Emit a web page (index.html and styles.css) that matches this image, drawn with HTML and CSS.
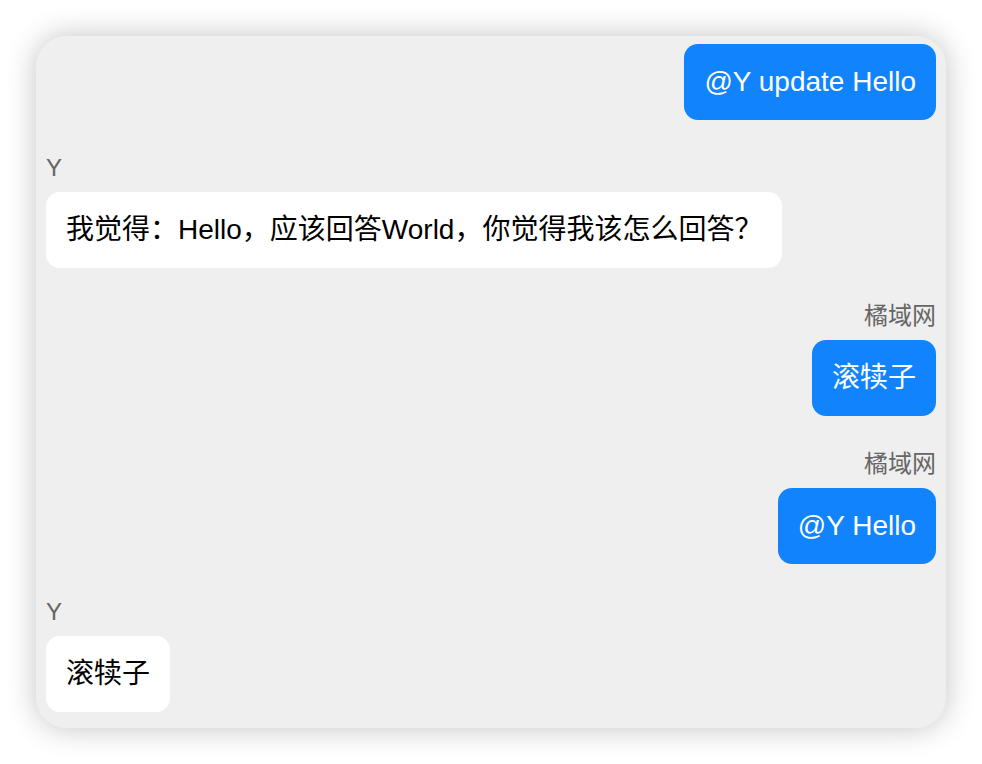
FILE: index.html
```html
<!DOCTYPE html>
<html lang="zh-CN">
<head>
    <meta charset="UTF-8" />
    <meta name="viewport" content="width=device-width, initial-scale=1" />
    <title>Chat</title>
    <link rel="stylesheet" href="styles.css">
</head>
<body>
    <div class="chat-box">
        <div class="msg msg-self">
            <div class="bubble">@Y update Hello</div>
        </div>

        <div class="msg msg-other">
            <div class="sender">Y</div>
            <div class="bubble">我觉得：Hello，应该回答World，你觉得我该怎么回答？</div>
        </div>

        <div class="msg msg-self">
            <div class="sender">橘域网</div>
            <div class="bubble">滚犊子</div>
        </div>

        <div class="msg msg-self">
            <div class="sender">橘域网</div>
            <div class="bubble">@Y Hello</div>
        </div>

        <div class="msg msg-other">
            <div class="sender">Y</div>
            <div class="bubble">滚犊子</div>
        </div>
    </div>
</body>
</html>
```

FILE: styles.css
```css
body {
    margin: 0;
    padding: 36px;
    background: #fff;
    font-family: 'Liberation Sans', Arial, 'Noto Sans CJK SC', sans-serif;
}
.chat-box {
    display: flex;
    flex-direction: column;
    padding: 8px 10px 16px;
    background: #efefef;
    border-radius: 30px;
    box-shadow: 0 0 30px rgba(0, 0, 0, 0.24);
}
.msg {
    display: flex;
    flex-direction: column;
    margin-top: 34px;
}
.msg:first-child {
    margin-top: 0;
}
.msg-self {
    align-items: flex-end;
}
.msg-other {
    align-items: flex-start;
}
.sender {
    font-size: 24px;
    line-height: 28px;
    color: #666;
    margin-bottom: 10px;
}
.bubble {
    font-size: 28px;
    line-height: 32px;
    padding: 22px 20px;
    border-radius: 14px;
    background: #fff;
    color: #000;
}
.msg-self .bubble {
    background: #1183fd;
    color: #fff;
}
```
